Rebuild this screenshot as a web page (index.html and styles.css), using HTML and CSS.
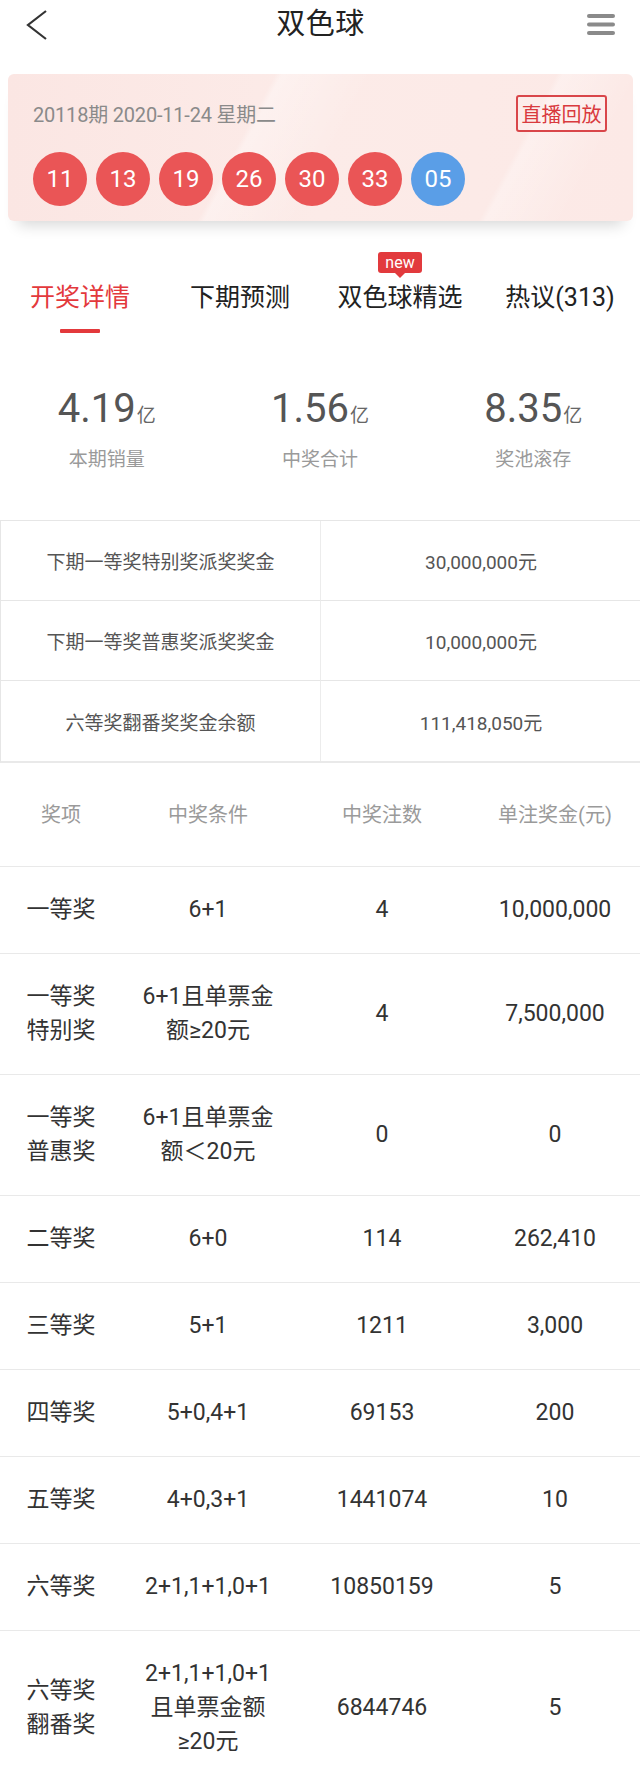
FILE: index.html
```html
<!DOCTYPE html>
<html lang="zh-CN">
<head>
<meta charset="utf-8">
<title>双色球</title>
<link rel="stylesheet" href="styles.css">
</head>
<body>
<header class="topbar">
  <svg class="back" width="22" height="32" viewBox="0 0 22 32"><polyline points="20,2 2,16 20,30" fill="none" stroke="#333" stroke-width="2.2" stroke-linejoin="miter"/></svg>
  <h1 class="title">双色球</h1>
  <svg class="menu" width="28" height="22" viewBox="0 0 28 22"><rect x="0" y="0" width="28" height="4" rx="2" fill="#8a8a8a"/><rect x="0" y="8.5" width="28" height="4" rx="2" fill="#8a8a8a"/><rect x="0" y="17" width="28" height="4" rx="2" fill="#8a8a8a"/></svg>
</header>

<section class="draw">
  <div class="draw-head">
    <span class="issue">20118期 2020-11-24 星期二</span>
    <span class="replay">直播回放</span>
  </div>
  <div class="balls">
    <span class="ball red">11</span>
    <span class="ball red">13</span>
    <span class="ball red">19</span>
    <span class="ball red">26</span>
    <span class="ball red">30</span>
    <span class="ball red">33</span>
    <span class="ball blue">05</span>
  </div>
</section>

<nav class="tabs">
  <div class="tab active"><span class="tab-label">开奖详情</span></div>
  <div class="tab"><span class="tab-label">下期预测</span></div>
  <div class="tab"><span class="tab-label">双色球精选<span class="badge">new</span></span></div>
  <div class="tab"><span class="tab-label">热议(313)</span></div>
</nav>

<section class="stats">
  <div class="stat"><div class="num">4.19<span class="unit">亿</span></div><div class="label">本期销量</div></div>
  <div class="stat"><div class="num">1.56<span class="unit">亿</span></div><div class="label">中奖合计</div></div>
  <div class="stat"><div class="num">8.35<span class="unit">亿</span></div><div class="label">奖池滚存</div></div>
</section>

<section class="info">
  <div class="info-cell">下期一等奖特别奖派奖奖金</div>
  <div class="info-cell">30,000,000元</div>
  <div class="info-cell">下期一等奖普惠奖派奖奖金</div>
  <div class="info-cell">10,000,000元</div>
  <div class="info-cell">六等奖翻番奖奖金余额</div>
  <div class="info-cell">111,418,050元</div>
</section>

<section class="prizes">
  <div class="prow phead"><div>奖项</div><div>中奖条件</div><div>中奖注数</div><div>单注奖金(元)</div></div>
  <div class="prow"><div>一等奖</div><div>6+1</div><div>4</div><div>10,000,000</div></div>
  <div class="prow"><div>一等奖<br>特别奖</div><div>6+1且单票金<br>额≥20元</div><div>4</div><div>7,500,000</div></div>
  <div class="prow"><div>一等奖<br>普惠奖</div><div>6+1且单票金<br>额＜20元</div><div>0</div><div>0</div></div>
  <div class="prow"><div>二等奖</div><div>6+0</div><div>114</div><div>262,410</div></div>
  <div class="prow"><div>三等奖</div><div>5+1</div><div>1211</div><div>3,000</div></div>
  <div class="prow"><div>四等奖</div><div>5+0,4+1</div><div>69153</div><div>200</div></div>
  <div class="prow"><div>五等奖</div><div>4+0,3+1</div><div>1441074</div><div>10</div></div>
  <div class="prow"><div>六等奖</div><div>2+1,1+1,0+1</div><div>10850159</div><div>5</div></div>
  <div class="prow"><div>六等奖<br>翻番奖</div><div>2+1,1+1,0+1<br>且单票金额<br>≥20元</div><div>6844746</div><div>5</div></div>
</section>
</body>
</html>
```

FILE: styles.css
```css
* { box-sizing: border-box; margin: 0; padding: 0; }
html, body { background: #fff; }
body {
  margin: 0;
  width: 640px;
  font-family: Roboto, "Noto Sans CJK SC", sans-serif;
  color: #333;
  overflow: hidden;
}

/* top bar */
.topbar {
  height: 48px;
  display: grid;
  grid-template-columns: 1fr auto 1fr;
  align-items: center;
  padding: 0 25px 0 26px;
}
.back { display: block; margin-top: 1px; }
.menu { display: block; justify-self: end; margin-top: 2px; }
.title {
  font-size: 29px;
  font-weight: 400;
  color: #222;
  line-height: 48px;
  letter-spacing: 0.5px;
}

/* draw card */
.draw {
  margin: 26px 7px 0 8px;
  padding: 21px 26px 15px 25px;
  border-radius: 6px;
  background:
    linear-gradient(118deg, rgba(255,255,255,0) 0%, rgba(255,255,255,0) 38%, rgba(255,255,255,0.35) 39%, rgba(255,255,255,0) 52%, rgba(255,255,255,0) 78%, rgba(255,255,255,0.3) 79%, rgba(255,255,255,0) 90%),
    linear-gradient(90deg, #fbe6e3 0%, #fcebe8 50%, #fce9e6 100%);
  box-shadow: 0 14px 14px -10px rgba(0,0,0,0.16);
}
.draw-head {
  height: 37px;
  display: flex;
  align-items: center;
  justify-content: space-between;
}
.issue {
  font-size: 20px;
  color: #8a8a8a;
  letter-spacing: -0.2px;
}
.replay {
  width: 91px;
  height: 37px;
  border: 2px solid #d9464a;
  border-radius: 3px;
  color: #d93a3e;
  font-size: 20px;
  display: flex;
  align-items: center;
  justify-content: center;
  background: rgba(255,255,255,0.15);
}
.balls {
  margin-top: 20px;
  display: flex;
  gap: 9px;
}
.ball {
  width: 54px;
  height: 54px;
  border-radius: 50%;
  color: #fff;
  font-size: 24px;
  display: flex;
  align-items: center;
  justify-content: center;
}
.ball.red { background: #ea5556; }
.ball.blue { background: #5a9ee7; }

/* tabs */
.tabs {
  display: flex;
  padding-top: 60px;
}
.tab {
  flex: 1;
  display: flex;
  flex-direction: column;
  align-items: center;
}
.tab-label {
  position: relative;
  font-size: 25px;
  line-height: 34px;
  color: #222;
}
.tab::after {
  content: "";
  display: block;
  width: 40px;
  height: 4px;
  margin-top: 14px;
  border-radius: 1px;
  background: transparent;
}
.tab.active .tab-label { color: #e3393c; }
.tab.active::after { background: #e3393c; }
.badge {
  position: absolute;
  top: -29px;
  left: 50%;
  transform: translateX(-50%);
  width: 44px;
  height: 21px;
  border-radius: 3px;
  background: #e23a3d;
  color: #fff;
  font-size: 16px;
  line-height: 21px;
  text-align: center;
}
.badge::after {
  content: "";
  position: absolute;
  left: 50%;
  bottom: -5px;
  margin-left: -5px;
  border-left: 5px solid transparent;
  border-right: 5px solid transparent;
  border-top: 5px solid #e23a3d;
}

/* stats */
.stats {
  display: grid;
  grid-template-columns: repeat(3, 1fr);
  margin-top: 52px;
  text-align: center;
}
.num {
  font-size: 40px;
  line-height: 48px;
  color: #555;
}
.unit {
  font-size: 19px;
  color: #666;
  margin-left: 1px;
}
.label {
  margin-top: 7px;
  font-size: 19px;
  line-height: 26px;
  color: #9a9a9a;
}

/* info table */
.info {
  margin-top: 47px;
  display: grid;
  grid-template-columns: 320px 320px;
  border-top: 1px solid #e6e6e6;
  border-left: 1px solid #e6e6e6;
  border-bottom: 2px solid #e9e9e9;
}
.info-cell {
  height: 80px;
  display: flex;
  align-items: center;
  justify-content: center;
  font-size: 19px;
  color: #555;
  border-bottom: 1px solid #e6e6e6;
}
.info-cell:nth-child(odd) { border-right: 1px solid #ececec; }
.info-cell:nth-last-child(-n+2) { border-bottom: none; }

/* prize table */
.prow {
  display: grid;
  grid-template-columns: 122px 172px 176px 1fr;
  align-items: center;
  text-align: center;
  padding: 26px 0;
  border-bottom: 1px solid #e9e9e9;
  font-size: 23px;
  line-height: 34px;
  color: #333;
}
.prow.phead {
  height: 104px;
  padding: 0;
  font-size: 20px;
  color: #9a9a9a;
}
```
